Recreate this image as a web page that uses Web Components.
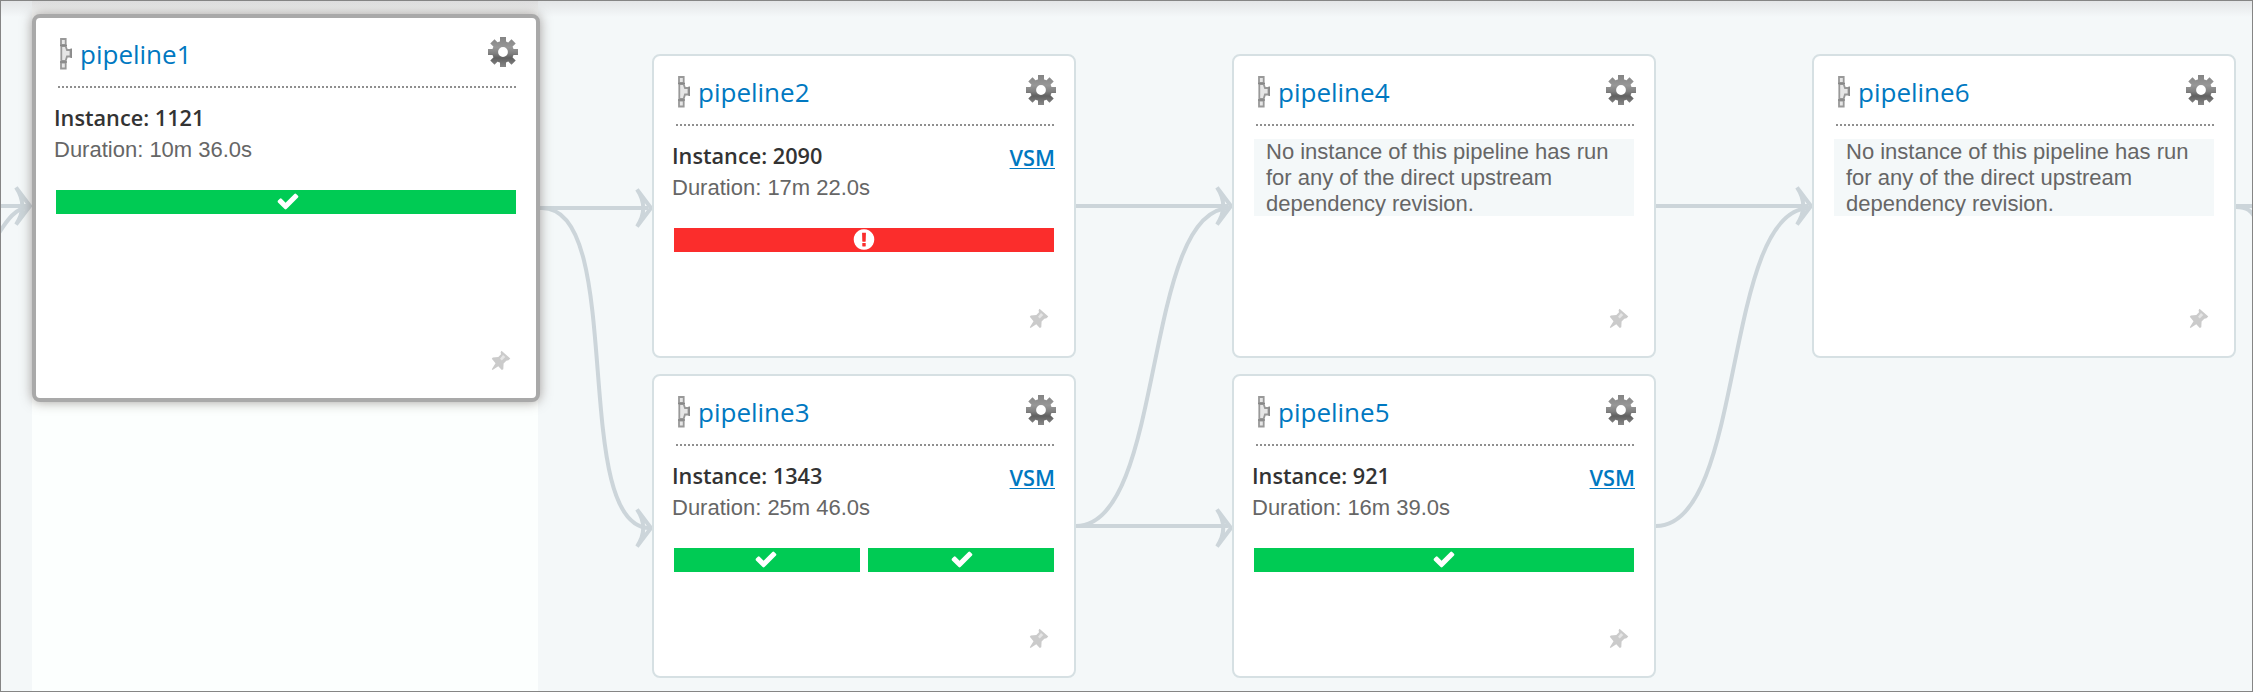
<!DOCTYPE html>
<html lang="en">
<head>
<meta charset="utf-8">
<title>Value Stream Map</title>
<style>
html, body { margin: 0; height: 100%; overflow: hidden; }
</style>
</head>
<body>
<vsm-map>
  <vsm-level current>
    <pipeline-card current name="pipeline1" counter="1121" duration="10m 36.0s"><stage-bar style="--nudge:2px"></stage-bar></pipeline-card>
  </vsm-level>
  <vsm-level>
    <pipeline-card name="pipeline2" counter="2090" duration="17m 22.0s" vsm><stage-bar failed></stage-bar></pipeline-card>
    <pipeline-card name="pipeline3" counter="1343" duration="25m 46.0s" vsm><stage-bar style="--nudge:-1px"></stage-bar><stage-bar style="--nudge:1px"></stage-bar></pipeline-card>
  </vsm-level>
  <vsm-level>
    <pipeline-card name="pipeline4"></pipeline-card>
    <pipeline-card name="pipeline5" counter="921" duration="16m 39.0s" vsm><stage-bar></stage-bar></pipeline-card>
  </vsm-level>
  <vsm-level>
    <pipeline-card name="pipeline6"></pipeline-card>
  </vsm-level>
</vsm-map>

<script>
const define = (tag, html) => customElements.define(tag, class extends HTMLElement {
  constructor() {
    super();
    const t = document.createElement('template');
    t.innerHTML = typeof html === 'function' ? html(this) : html;
    this.attachShadow({ mode: 'open' }).append(t.content.cloneNode(true));
  }
});

const arrow = (x, y) => `<path d="M${x - 15} ${y - 18.5}L${x - 1} ${y}L${x - 15} ${y + 18.5}Q${x - 2.5} ${y} ${x - 15} ${y - 18.5}Z"/>`;

define('vsm-edges', `
<style>
:host { display: block; position: absolute; inset: 0; pointer-events: none; }
svg { display: block; }
</style>
<svg width="2251" height="690" viewBox="1 1 2251 690" fill="none" stroke="#ccd5da" stroke-width="4">
  <path d="M0 206H28M-3 236C7 220 16 207 30 207"/>${arrow(31, 206)}
  <path d="M540 208H648M542 208C627 208 569 528 650 528"/>${arrow(652, 208)}${arrow(652, 528)}
  <path d="M1076 206H1228M1076 526H1228M1076 526C1166 526 1142 208 1230 208"/>${arrow(1232, 206)}${arrow(1232, 528)}
  <path d="M1656 206H1808M1656 526C1746 526 1722 208 1810 208"/>${arrow(1812, 206)}
  <path d="M2236 206H2260M2236 207C2247 207 2251 210 2257 221"/>
</svg>`);

define('vsm-map', `
<style>
:host { display: flex; gap: 156px; box-sizing: border-box; width: 2253px; height: 692px; position: relative;
  border: 1px solid #858585; padding-left: 31px; overflow: hidden; background: #f4f8f9;
  font-family: "Open Sans", sans-serif; }
.shade { position: absolute; inset: 0 0 auto; height: 16px; background: linear-gradient(rgba(90,75,85,.11), rgba(90,75,85,0)); }
slot { display: contents; }
</style>
<vsm-edges></vsm-edges><div class="shade"></div><slot></slot>`);

define('vsm-level', `
<style>
:host { display: flex; flex-direction: column; gap: 16px; box-sizing: border-box; flex: none; width: 424px; padding-top: 53px; }
:host([current]) { width: 506px; padding-top: 13px; margin-right: -42px;
  background: linear-gradient(rgba(90,75,85,.09), rgba(90,75,85,0) 16px), #fcfffe; }
</style><slot></slot>`);

define('stage-bar', el => `
<style>
:host { display: flex; flex: 1; height: 24px; align-items: center; justify-content: center; background: #00cb54; }
:host([failed]) { background: #fb2d2c; }
svg { display: block; width: 24px; height: 24px; fill: #fff; transform: translateX(var(--nudge, 0)); }
</style>
${el.hasAttribute('failed')
  ? '<svg viewBox="0 36 1792 1792"><path d="M896 128q209 0 385.500 103t279.500 279.500 103 385.500-103 385.500-279.500 279.500-385.500 103-385.500-103-279.500-279.500-103-385.500 103-385.500 279.500-279.500 385.500-103zm128 1247v-190q0-14-9-23.500t-22-9.500h-192q-13 0-23 10t-10 23v190q0 13 10 23t23 10h192q13 0 22-9.500t9-23.500zm-2-344l18-621q0-12-10-18-10-8-24-8h-220q-14 0-24 8-10 6-10 18l17 621q0 10 10 17.500t24 7.500h185q14 0 23.500-7.500t10.500-17.500z"/></svg>'
  : '<svg viewBox="0 72 1792 1792"><path d="M1671 566q0 40-28 68l-724 724-136 136q-28 28-68 28t-68-28l-136-136-362-362q-28-28-28-68t28-68l136-136q28-28 68-28t68 28l294 295 656-657q28-28 68-28t68 28l136 136q28 28 28 68z"/></svg>'}`);

define('pipe-icon', `
<style>:host { display: block; } svg { display: block; }</style>
<svg width="14" height="34" viewBox="0 0 14 34" fill="#e6e6e6" stroke="#999" stroke-width="1.8">
  <path d="M2.300 9V24H6.600L8 19.500H11.500V13H8L6.600 9Z"/>
  <path d="M2 2H6.700V8H2ZM2 25.500H6.700V31.500H2Z"/>
  <path d="M1 8.500H8M1 25H8M12.200 11.500V21" stroke-width="1.500" stroke="#888"/>
</svg>`);

define('gear-icon', `
<style>:host { display: block; } svg { display: block; }</style>
<svg width="30" height="30" viewBox="-15 -15 30 30">
  <defs><linearGradient id="g" x1="0" y1="-15" x2="0" y2="15" gradientUnits="userSpaceOnUse">
    <stop offset="0" stop-color="#848484"/><stop offset=".35" stop-color="#979797"/><stop offset=".55" stop-color="#808080"/><stop offset=".7" stop-color="#606060"/><stop offset="1" stop-color="#888"/></linearGradient></defs>
  <g stroke="url(#g)" fill="none" stroke-width="6">
    <circle r="7.900"/>
    <path d="M.001 -15L0 -9M.001 15L0 9M-15 .001L-9 0M15 .001L9 0"/>
    <path d="M-10.600 -10.600L-6.500 -6.500M10.600 10.600L6.500 6.500M-10.600 10.600L-6.500 6.500M10.600 -10.600L6.500 -6.500"/>
  </g>
</svg>`);

define('pin-icon', `
<style>:host { display: block; } svg { display: block; overflow: visible; filter: blur(.4px); }</style>
<svg width="20" height="21" viewBox="0 0 20 21">
  <path d="M10.500 .8L19.300 8.400L17.500 10.200L15.300 10.700L12.600 13.600L12.300 19.200L10.800 20L7.300 16.200L1.500 20L.8 19.300L4.500 13.200L.8 8.800L1.800 7.500L7.300 7L10 4.300L9.600 2.200Z" fill="#cbcbcb"/>
  <path d="M12 5L14.300 6.900L10.800 10.600L9 8.700Z" fill="#e6e6e6"/>
</svg>`);

define('pipeline-card', el => {
  const a = n => el.getAttribute(n);
  const body = a('counter') ? `
    <div class="run">
      <div class="info"><div class="instance">Instance: ${a('counter')}</div><div class="duration">Duration: ${a('duration')}</div></div>
      ${el.hasAttribute('vsm') ? '<a class="vsm">VSM</a>' : ''}
    </div>
    <div class="stages"><slot></slot></div>`
    : `<div class="none">No instance of this pipeline has run for any of the direct upstream dependency revision.</div>`;
  return `
<style>
:host { display: flex; flex-direction: column; box-sizing: border-box; flex: none; position: relative; width: 424px; height: 304px;
  border: 2px solid #d6e0e3; border-radius: 8px; background: #fff; padding: 0 20px; }
:host([current]) { width: 508px; height: 388px; border: 4px solid #a9a9a9; box-shadow: 0 0 12px rgba(80,65,60,.5); }
header { display: flex; height: 68px; margin-left: 2px; padding: 19px 0 0 1px; box-sizing: border-box; align-items: flex-start; }
.rule { height: 2px; margin-left: 2px; background: repeating-linear-gradient(90deg, #8f8f8f 0 2px, transparent 2px 4px); }
h3 { margin: -1px 0 0 7px; font-size: 26px; line-height: 36px; font-weight: 400; color: #0078c1; flex: 1; }
gear-icon { margin-right: -2px; }
.run { display: flex; justify-content: space-between; height: 88px; margin: 14px -1px 0 -2px; }
.instance { font-size: 21.700px; line-height: 32px; font-weight: 600; color: #333; }
.duration { font: 22px/32px "Liberation Sans", Arial, sans-serif; color: #666; }
.vsm { font-size: 21.700px; line-height: 32px; font-weight: 600; color: #0078c1; text-decoration: underline; text-underline-offset: 2px; text-decoration-thickness: 1px; margin-top: 2px; height: 32px; }
.stages { display: flex; gap: 8px; }
.none { margin-top: 13px; padding: 0 12px; height: 77px; background: #f4f8f9; color: #666; font: 22px/26px "Liberation Sans", Arial, sans-serif; }
footer { margin-top: auto; display: flex; justify-content: flex-end; padding: 0 5px 27px 0; }
</style>
<header><pipe-icon></pipe-icon><h3>${a('name')}</h3><gear-icon></gear-icon></header>
<div class="rule"></div>
${body}
<footer><pin-icon></pin-icon></footer>`;
});
</script>
</body>
</html>
